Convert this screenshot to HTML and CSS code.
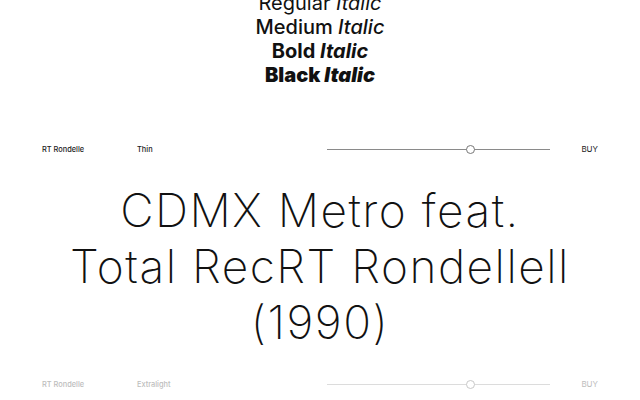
FILE: index.html
```html
<!DOCTYPE html>
<html>
<head>
<meta charset="utf-8">
<link rel="stylesheet" href="styles.css">
</head>
<body>
<div class="weights">
  <div class="w w-regular">Regular <i>Italic</i></div>
  <div class="w w-medium">Medium <i>Italic</i></div>
  <div class="w w-bold">Bold <i>Italic</i></div>
  <div class="w w-black">Black <i>Italic</i></div>
</div>

<section class="tester">
  <div class="row">
    <span class="name">RT Rondelle</span>
    <span class="style">Thin</span>
    <div class="slider"><span class="knob"></span></div>
    <span class="buy">BUY</span>
  </div>
  <p class="sample sample-thin">CDMX Metro feat.<br>Total RecRT Rondellell<br>(1990)</p>
</section>

<section class="tester dim">
  <div class="row">
    <span class="name">RT Rondelle</span>
    <span class="style">Extralight</span>
    <div class="slider"><span class="knob"></span></div>
    <span class="buy">BUY</span>
  </div>
</section>
</body>
</html>
```
FILE: styles.css
```css
html, body {
  margin: 0;
  padding: 0;
  background: #fff;
  overflow: hidden;
}
body {
  width: 640px;
  height: 400px;
  font-family: Inter, "Liberation Sans", sans-serif;
  color: #111;
}
.weights {
  margin-top: -9px;
  text-align: center;
  font-size: 20px;
  line-height: 24px;
}
.weights i { font-style: italic; }
.w-regular { font-weight: 400; }
.w-medium { font-weight: 500; }
.w-bold { font-weight: 700; }
.w-black { font-weight: 900; }

.weights + .tester { margin-top: 52px; }
.row {
  display: grid;
  grid-template-columns: 95px 190px 223px 1fr;
  align-items: center;
  height: 20px;
  padding: 0 42px;
  font-size: 7.4px;
  font-weight: 500;
  color: #222;
}
.slider {
  position: relative;
  height: 1px;
  background: #8a8a8a;
}
.knob {
  position: absolute;
  left: 64%;
  top: -4px;
  width: 7px;
  height: 7px;
  margin-left: -4px;
  border-radius: 50%;
  border: 1px solid #777;
  background: #fff;
}
.buy { justify-self: end; font-size: 8px; font-weight: 400; }
.sample {
  margin: 23px 0 24px;
  text-align: center;
  font-size: 46px;
  line-height: 56px;
  font-weight: 200;
  letter-spacing: 1.5px;
  color: #111;
}
.dim .row { color: #bdbdbd; }
.dim .slider { background: #dcdcdc; }
.dim .knob { border-color: #c8c8c8; }
```
